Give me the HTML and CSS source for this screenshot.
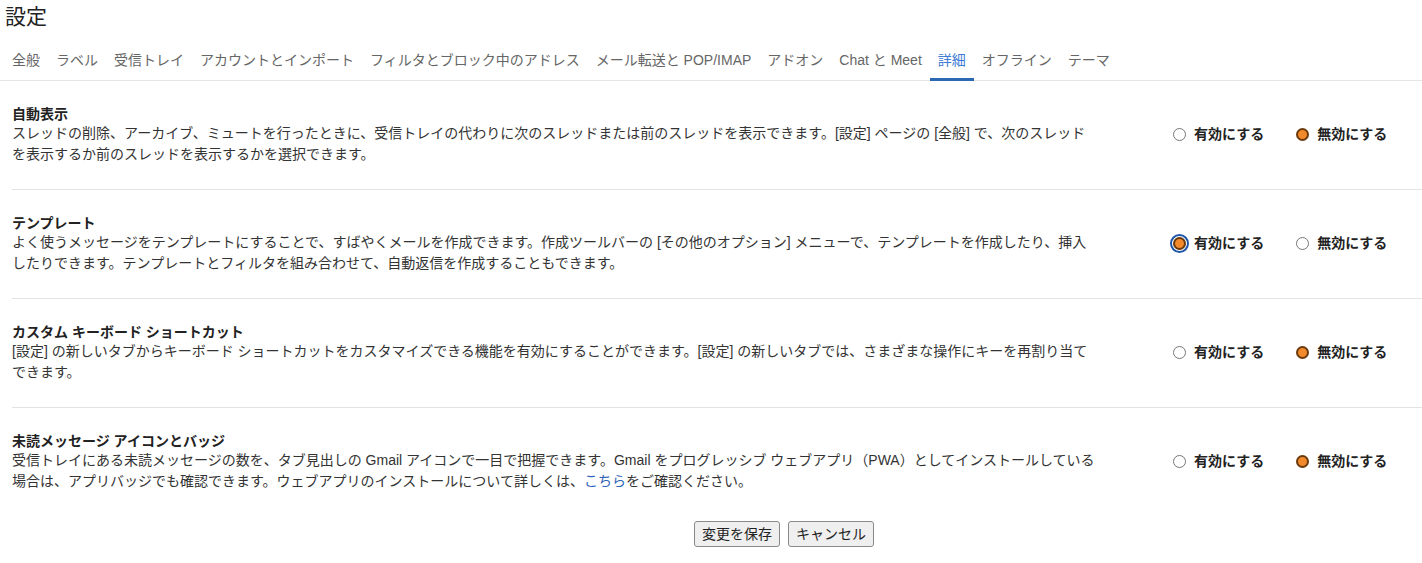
FILE: index.html
```html
<!DOCTYPE html>
<html lang="ja">
<head>
<meta charset="utf-8">
<title>設定</title>
<link rel="stylesheet" href="styles.css">
</head>
<body>
<div class="page">
  <h1 class="page-title">設定</h1>
  <nav class="tabs">
    <a class="tab">全般</a>
    <a class="tab">ラベル</a>
    <a class="tab">受信トレイ</a>
    <a class="tab">アカウントとインポート</a>
    <a class="tab">フィルタとブロック中のアドレス</a>
    <a class="tab">メール転送と POP/IMAP</a>
    <a class="tab">アドオン</a>
    <a class="tab">Chat と Meet</a>
    <a class="tab tab-active">詳細</a>
    <a class="tab">オフライン</a>
    <a class="tab">テーマ</a>
  </nav>

  <div class="settings">
    <div class="setting">
      <div class="setting-text">
        <div class="setting-title">自動表示</div>
        <div class="setting-desc">スレッドの削除、アーカイブ、ミュートを行ったときに、受信トレイの代わりに次のスレッドまたは前のスレッドを表示できます。[設定] ページの [全般] で、次のスレッドを表示するか前のスレッドを表示するかを選択できます。</div>
      </div>
      <div class="setting-options">
        <label class="option"><input type="radio" name="s1" class="radio"><span>有効にする</span></label>
        <label class="option"><input type="radio" name="s1" class="radio" checked><span>無効にする</span></label>
      </div>
    </div>

    <div class="setting">
      <div class="setting-text">
        <div class="setting-title">テンプレート</div>
        <div class="setting-desc">よく使うメッセージをテンプレートにすることで、すばやくメールを作成できます。作成ツールバーの [その他のオプション] メニューで、テンプレートを作成したり、挿入したりできます。テンプレートとフィルタを組み合わせて、自動返信を作成することもできます。</div>
      </div>
      <div class="setting-options">
        <label class="option"><input type="radio" name="s2" class="radio radio-focus" checked><span>有効にする</span></label>
        <label class="option"><input type="radio" name="s2" class="radio"><span>無効にする</span></label>
      </div>
    </div>

    <div class="setting">
      <div class="setting-text">
        <div class="setting-title">カスタム キーボード ショートカット</div>
        <div class="setting-desc">[設定] の新しいタブからキーボード ショートカットをカスタマイズできる機能を有効にすることができます。[設定] の新しいタブでは、さまざまな操作にキーを再割り当てできます。</div>
      </div>
      <div class="setting-options">
        <label class="option"><input type="radio" name="s3" class="radio"><span>有効にする</span></label>
        <label class="option"><input type="radio" name="s3" class="radio" checked><span>無効にする</span></label>
      </div>
    </div>

    <div class="setting setting-last">
      <div class="setting-text">
        <div class="setting-title">未読メッセージ アイコンとバッジ</div>
        <div class="setting-desc">受信トレイにある未読メッセージの数を、タブ見出しの Gmail アイコンで一目で把握できます。Gmail をプログレッシブ ウェブアプリ（PWA）としてインストールしている場合は、アプリバッジでも確認できます。ウェブアプリのインストールについて詳しくは、<a class="link">こちら</a>をご確認ください。</div>
      </div>
      <div class="setting-options">
        <label class="option"><input type="radio" name="s4" class="radio"><span>有効にする</span></label>
        <label class="option"><input type="radio" name="s4" class="radio" checked><span>無効にする</span></label>
      </div>
    </div>
  </div>

  <div class="actions">
    <button class="btn">変更を保存</button>
    <button class="btn">キャンセル</button>
  </div>
</div>
</body>
</html>
```

FILE: styles.css
```css
* { box-sizing: border-box; }

html, body {
  margin: 0;
  padding: 0;
  background: #ffffff;
}

body {
  font-family: "Liberation Sans", "Noto Sans CJK JP", sans-serif;
  font-size: 14px;
  color: #222222;
}

.page {
  width: 1422px;
}

.page-title {
  margin: 3px 0 0 0;
  padding-left: 5px;
  font-size: 21px;
  line-height: 28px;
  font-weight: 400;
  color: #222222;
  height: 37px;
}

.tabs {
  display: flex;
  padding-left: 4px;
  height: 41px;
  border-bottom: 1px solid #e6e6e6;
}

.tab {
  display: block;
  padding: 10px 8px 8px 8px;
  line-height: 20px;
  font-size: 14px;
  color: #666666;
  border-bottom: 3px solid transparent;
  margin-bottom: -1px;
  white-space: nowrap;
  cursor: pointer;
}

.tab-active {
  color: #3d7bd4;
  border-bottom-color: #2d68b3;
}

.settings {
  margin-left: 12px;
}

.setting {
  display: flex;
  align-items: center;
  padding: 25px 0 24px 0;
  border-bottom: 1px solid #e3e3e3;
}

.setting-last {
  border-bottom: none;
}

.setting-text {
  flex: 0 0 1083px;
}

.setting-title {
  font-weight: 700;
  line-height: 17px;
  color: #222222;
}

.setting-desc {
  line-height: 21px;
  color: #333333;
}

.link {
  color: #2f64b8;
  cursor: pointer;
}

.setting-options {
  display: flex;
  align-items: center;
  margin-left: 78px;
  margin-bottom: 3px;
}

.option {
  display: flex;
  align-items: center;
  font-weight: 700;
  color: #222222;
  line-height: 20px;
  margin-right: 32px;
  white-space: nowrap;
}

.radio {
  appearance: none;
  -webkit-appearance: none;
  width: 13px;
  height: 13px;
  margin: 0 8px 0 0;
  border: 1px solid #767676;
  border-radius: 50%;
  background: #ffffff;
}

.radio:checked {
  border: 2px solid #6a3a0c;
  background: #f2892a;
}

.radio-focus {
  outline: 2px solid #1f56a8;
  outline-offset: 1px;
  border-radius: 50%;
}

.actions {
  display: flex;
  gap: 8px;
  margin-top: 5px;
  padding-left: 694px;
}

.btn {
  font-family: "Liberation Sans", "Noto Sans CJK JP", sans-serif;
  font-size: 14px;
  color: #222222;
  height: 26px;
  padding: 0 7px;
  background: #efefef;
  border: 1px solid #8a8a8a;
  border-radius: 3px;
  line-height: 24px;
}
```
